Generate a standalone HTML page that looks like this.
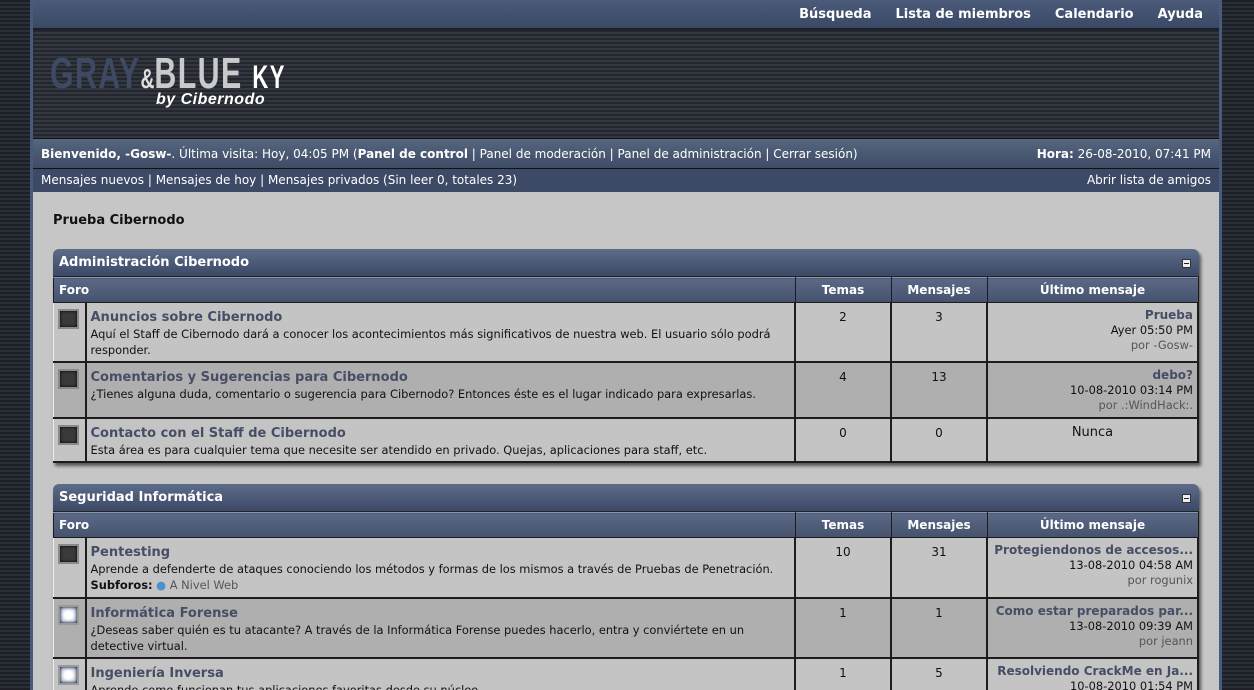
<!DOCTYPE html>
<html><head><meta charset="utf-8"><style>
*{margin:0;padding:0;box-sizing:border-box}
html,body{height:690px;overflow:hidden}
body{width:1254px;font-family:"DejaVu Sans",Verdana,sans-serif;font-size:11px;color:#111;position:relative;
background:repeating-linear-gradient(#1c1f26 0 2px,#2b2f38 2px 4px)}
#wrap{position:absolute;left:30px;top:0;width:1192px;height:690px;background:#c6c6c6;border-left:3px solid #4a5a7a;border-right:3px solid #4a5a7a;overflow:hidden}
#top{height:30px;background:linear-gradient(#4a5a78,#3a4966);border-bottom:2px solid #1a1f2a;text-align:right;padding-right:16px}
#top a{color:#fff;font-weight:bold;font-size:13px;line-height:30px;margin-left:24px;text-decoration:none}
#head{height:109px;background:repeating-linear-gradient(#23262d 0 2px,#33373f 2px 4px);position:relative;border-bottom:1px solid #111}
.logo{position:absolute;left:17px;top:22px;font-family:"Liberation Sans",sans-serif;font-weight:bold;font-size:44px;letter-spacing:2px;transform:scaleX(.69);transform-origin:left;line-height:44px;white-space:nowrap}
.logo .g{color:#3e4a63}.logo .a{color:#ddd;font-size:28px;letter-spacing:0}.logo .b{color:#c9cacc}.logo .k{color:#fff;font-size:32px}
.by{position:absolute;left:123px;top:62px;color:#fff;font-style:italic;font-weight:bold;font-size:16px;font-family:"Liberation Sans",sans-serif;line-height:16px;letter-spacing:.5px}
#bar1{height:30px;background:linear-gradient(#56667f,#3e4c66);color:#fff;font-size:12px;line-height:30px;padding:0 8px;border-bottom:1px solid #111}
#bar2{height:23px;background:#3c4a66;color:#fff;font-size:12px;line-height:23px;padding:0 8px}
.r{float:right}
h1{font-size:13px;font-weight:bold;margin:21px 0 0 20px;height:36px;line-height:15px}
.cat{margin:0 0 0 20px;width:1146px;border-radius:6px 6px 0 0;box-shadow:2px 3px 3px #555;margin-bottom:21px}
.ch{height:28px;background:linear-gradient(#5d6c89,#3b4966);color:#fff;font-weight:bold;font-size:13px;line-height:28px;padding-left:6px;border-radius:6px 6px 0 0;position:relative;border-bottom:1px solid #222}
.ch i{position:absolute;right:8px;top:10px;width:9px;height:9px;background:#eee;border:1px solid #333}
.ch i:after{content:"";position:absolute;left:1px;top:3px;width:5px;height:1px;background:#222}
table{border-collapse:collapse;width:100%;table-layout:fixed}
th{height:25px;background:linear-gradient(#5b6986,#44526e);color:#fff;font-size:12px;border:1px solid #1c1c1c;border-top:1px solid #8a96ab}
th.l{text-align:left;padding-left:5px}
td{border:2px solid #1c1c1c;border-top:1px solid #eee;border-left:1px solid #eee;vertical-align:top;padding:6px 4px 3px;font-size:11.4px;line-height:16px;background:#c4c4c4}
tr.alt td{background:#afafaf}
td.i{padding:6px 0 0 4px}
td.i span{display:block;width:21px;height:20px;background:#3a3a3a;border:2px solid #8a8a8a;box-shadow:inset 0 0 3px #000}
td.i span.n{background:radial-gradient(#fff 30%,#b8c4e4 80%,#8fa0c6);border-color:#9a9a9a}
td.c{text-align:center;font-size:12px;padding-top:6px}
td.lp{text-align:right;font-size:11.4px;line-height:15px;padding-top:5px}
a.t{color:#464e66;font-weight:bold;font-size:13px;text-decoration:none}
.g{color:#555}
</style></head><body><div id="wrap">
<div id="top"><a>Búsqueda</a><a>Lista de miembros</a><a>Calendario</a><a>Ayuda</a></div>
<div id="head"><div class="logo"><span class="g">GRAY</span><span class="a">&amp;</span><span class="b">BLUE</span> <span class="k">KY</span></div><div class="by">by Cibernodo</div></div>
<div id="bar1"><span class="r"><b>Hora:</b> 26-08-2010, 07:41 PM</span><b>Bienvenido, -Gosw-</b>. Última visita: Hoy, 04:05 PM (<b>Panel de control</b> | Panel de moderación | Panel de administración | Cerrar sesión)</div>
<div id="bar2"><span class="r">Abrir lista de amigos</span>Mensajes nuevos | Mensajes de hoy | Mensajes privados (Sin leer 0, totales 23)</div>
<h1>Prueba Cibernodo</h1>
<div class="cat"><div class="ch">Administración Cibernodo<i></i></div>
<table><colgroup><col style="width:32px"><col><col style="width:96px"><col style="width:96px"><col style="width:211px"></colgroup>
<tr><th class="l" colspan="2">Foro</th><th>Temas</th><th>Mensajes</th><th>Último mensaje</th></tr>
<tr style="height:59px"><td class="i"><span></span></td><td><a class="t">Anuncios sobre Cibernodo</a><br>Aquí el Staff de Cibernodo dará a conocer los acontecimientos más significativos de nuestra web. El usuario sólo podrá responder.</td><td class="c">2</td><td class="c">3</td><td class="lp"><a class="t" style="font-size:12px">Prueba</a><br>Ayer 05:50 PM<br><span class="g">por -Gosw-</span></td></tr>
<tr class="alt" style="height:56px"><td class="i"><span></span></td><td><a class="t">Comentarios y Sugerencias para Cibernodo</a><br>¿Tienes alguna duda, comentario o sugerencia para Cibernodo? Entonces éste es el lugar indicado para expresarlas.</td><td class="c">4</td><td class="c">13</td><td class="lp"><a class="t" style="font-size:12px">debo?</a><br>10-08-2010 03:14 PM<br><span class="g">por .:WindHack:.</span></td></tr>
<tr style="height:44px"><td class="i"><span></span></td><td><a class="t">Contacto con el Staff de Cibernodo</a><br>Esta área es para cualquier tema que necesite ser atendido en privado. Quejas, aplicaciones para staff, etc.</td><td class="c">0</td><td class="c">0</td><td class="c" style="font-size:13px">Nunca</td></tr>
</table></div>
<div class="cat"><div class="ch">Seguridad Informática<i></i></div>
<table><colgroup><col style="width:32px"><col><col style="width:96px"><col style="width:96px"><col style="width:211px"></colgroup>
<tr><th class="l" colspan="2">Foro</th><th>Temas</th><th>Mensajes</th><th>Último mensaje</th></tr>
<tr style="height:60px"><td class="i"><span></span></td><td><a class="t">Pentesting</a><br>Aprende a defenderte de ataques conociendo los métodos y formas de los mismos a través de Pruebas de Penetración.<br><b>Subforos:</b> <span style="color:#4a90d0">●</span> <span class="g">A Nivel Web</span></td><td class="c">10</td><td class="c">31</td><td class="lp"><a class="t" style="font-size:12px">Protegiendonos de accesos...</a><br>13-08-2010 04:58 AM<br><span class="g">por rogunix</span></td></tr>
<tr class="alt" style="height:59px"><td class="i"><span class="n"></span></td><td><a class="t">Informática Forense</a><br>¿Deseas saber quién es tu atacante? A través de la Informática Forense puedes hacerlo, entra y conviértete en un detective virtual.</td><td class="c">1</td><td class="c">1</td><td class="lp"><a class="t" style="font-size:12px">Como estar preparados par...</a><br>13-08-2010 09:39 AM<br><span class="g">por jeann</span></td></tr>
<tr style="height:59px"><td class="i"><span class="n"></span></td><td><a class="t">Ingeniería Inversa</a><br>Aprende como funcionan tus aplicaciones favoritas desde su núcleo.</td><td class="c">1</td><td class="c">5</td><td class="lp"><a class="t" style="font-size:12px">Resolviendo CrackMe en Ja...</a><br>10-08-2010 01:54 PM</td></tr>
</table></div>
</div></body></html>
